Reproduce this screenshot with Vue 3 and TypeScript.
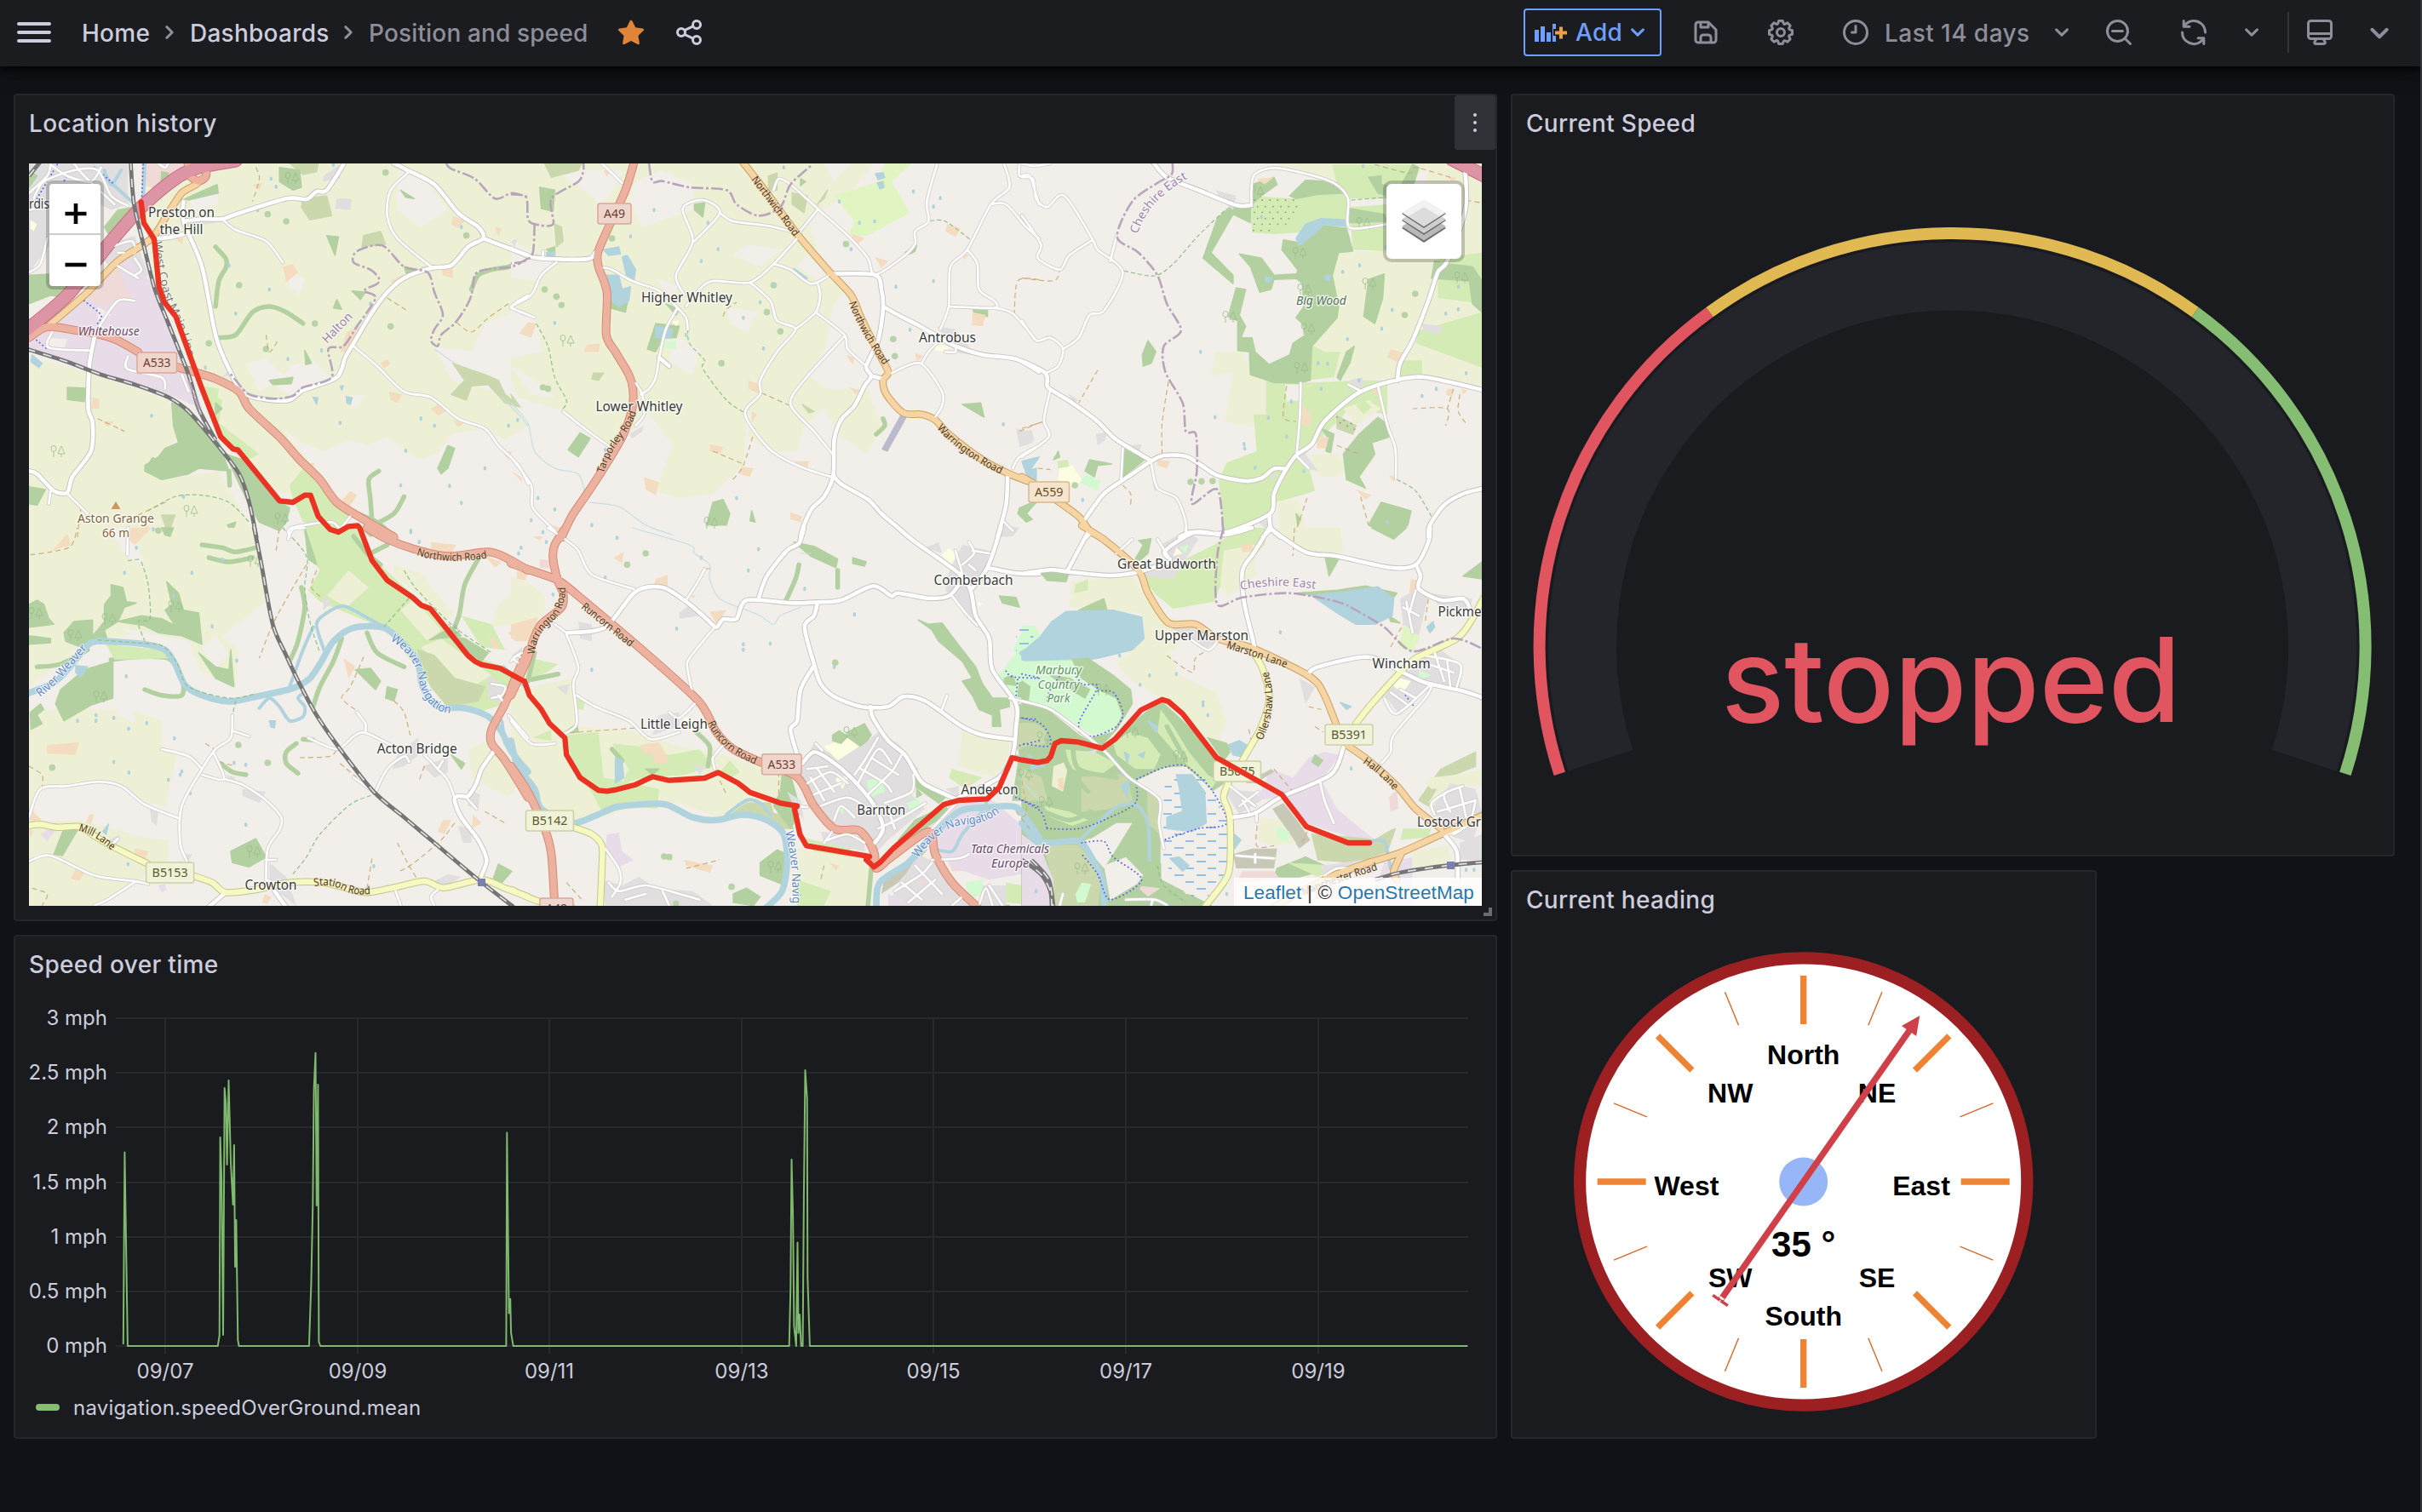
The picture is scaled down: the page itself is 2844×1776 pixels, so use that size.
<script setup lang="ts">
type Pt = [number, number]
interface Sheet { x: number; y: number; kx: number; ky: number; src: string }
interface Shape { kind: string; d: string }
interface Label { t: string; x: number; y: number; w: number; c?: string }
interface RoadLabel { t: string; d: string; w: number; c?: string }

const AREAS = ['farm', 'land', 'wood', 'grass', 'scrub', 'golf', 'park', 'water', 'res', 'ind', 'yard', 'school', 'strip', 'brown', 'pink', 'marsh']

/* Survey sheets: every row is "kind x,y x,y …; x,y …" in the sheet's own grid. */
const sheets: Sheet[] = [
  { x: 0, y: 180, kx: 2.529, ky: 3, src: `
farm 440,30 1568,30 1568,540 1440,600 1400,700 1290,680 1340,800 1500,850 1568,960 1500,1010 1440,970 1340,990 1300,1060 1240,1080 1150,1000 1090,1030 1040,1010 960,1050 880,1010 830,960 960,1150 860,1200 790,1180 650,950 600,800 520,560 460,480 430,200
farm 86,720 260,770 500,870 530,1000 430,1100 480,1150 650,1120 760,1352 86,1352
land 560,150 650,145 645,180 570,200; 860,750 930,730 985,790 860,850 820,830; 730,740 790,720 850,790 770,840; 1180,60 1260,90 1330,200 1250,260 1180,200; 860,430 905,440 890,500 860,470; 1010,860 1080,850 1060,900; 1400,700 1480,700 1568,760 1568,860 1500,800 1420,770
res 86,36 380,36 380,180 330,200 200,120 150,320 86,420
res 320,320 400,290 440,430 420,450 370,440 310,380; 530,770 570,790 600,900 570,860; 1000,160 1045,160 1040,200 995,195; 550,225 640,225 640,245 560,260; 1250,400 1290,400 1260,425; 960,80 1010,40 1010,90 960,100; 700,780 660,790 680,760
ind 86,640 150,590 230,500 300,440 350,370 370,360 470,480 500,600 560,780 600,900 520,860 280,780 86,690
pink 250,500 300,440 350,400 390,510 310,540; 420,36 560,36 540,90 480,130 420,110
land 290,540 330,570 290,590; 140,650 200,655 190,690 145,685
wood 86,430 160,425 230,480 200,510 150,500 86,530; 86,60 110,80 86,120; 350,200 400,190 330,300 310,260
wood 510,880 560,900 650,1020 680,1120 590,1110 560,1130 480,1150 430,1120 430,1100 470,1070 490,1040 530,1020 515,960
wood 670,1060 720,1080 830,1230 860,1250 850,1300 830,1330 770,1300 740,1240 700,1140
grass 630,850 660,870 650,950 770,1060 740,1080 700,1060 640,960; 600,820 650,830 640,900 620,880
grass 860,1170 900,1110 950,1130 1000,1240 1040,1280 1000,1330 900,1300 870,1220; 905,1352 900,1310 960,1290 1060,1352
scrub 1345,740 1390,760 1440,780 1480,800 1500,850 1545,895 1500,880 1450,815 1400,820 1385,870 1340,850 1380,800
scrub 900,160 970,150 985,220 920,235 895,190; 860,36 945,36 940,65 900,75; 1080,290 1130,275 1145,320 1075,330; 480,1275 520,1275 500,1340 490,1310
wood 830,50 890,60 895,120 870,130 830,100; 550,160 645,110 648,140 560,165; 480,65 500,70 500,110 478,105; 970,290 1005,295 995,360; 1200,400 1240,410 1210,435; 1045,485 1085,490 1070,515; 1000,515 1015,550 990,545; 905,695 925,740 908,745
wood 800,800 870,790 865,812 810,815; 1300,1110 1330,1030 1350,1040 1330,1110 1310,1130; 200,825 255,828 250,875 200,868; 86,1175 135,1185 110,1240 86,1235; 640,880 660,900 640,920; 1190,130 1230,160 1205,155; 675,1310 700,1300 690,1335
hedge 640,330 670,370 672,400 650,450 640,540; 650,650 700,640 750,560 800,540 850,560 900,600; 1400,480 1420,430 1460,410 1510,400 1555,375; 1105,1300 1100,1220 1095,1150 1125,1120; 1110,1310 1170,1270 1200,1210; 680,1120 682,1170; 440,1110 455,1080; 1060,1270 1120,1300 1150,1330
yard 840,400 870,390 885,420 850,455; 1010,700 1030,630 1070,610 1060,650 1030,700; 1345,220 1380,240 1360,265 1340,250; 1160,450 1200,425 1195,445 1170,465; 1310,390 1345,395 1345,440 1315,430; 1280,900 1310,880 1325,910 1300,925; 275,860 295,865 295,900 270,900; 1010,1230 1040,1190 1060,1205 1030,1260; 1155,840 1195,850 1180,880 1160,870; 390,1330 440,1310 445,1352 395,1352; 1130,740 1150,725 1160,740 1140,760; 1345,940 1380,950 1360,965; 1490,1050 1520,1050 1510,1080; 750,110 780,105 770,130; 1550,620 1568,600 1568,650; 305,945 340,945 320,965; 1470,260 1490,265 1480,295; 520,300 545,300 540,320; 905,1100 935,1090 925,1130
school 90,235 110,250 100,275 90,265
water 95,710 125,740 115,755 92,735; 1010,820 1020,820 1015,835; 1028,858 1046,862 1040,885 1030,880; 930,860 944,862 940,885
pond 805,90 680,395 700,565 855,725 610,755 1100,530 1290,960 1510,960 1440,1110 1205,1048 1335,1172 955,695 820,118 765,200 990,40 450,925 600,60 1010,950 1250,935 1190,1170 1370,1232 1220,1330 800,480 1370,260 545,1210
copse 1145,68 850,240 795,215 710,465 620,670 935,600 1160,610 1385,290 790,690 470,1330
trunk 86,650 140,612 230,625 300,640 350,660 410,700; 470,735 560,765 640,795 710,840 740,900 830,1000 890,1080 950,1150 1000,1230 1080,1290 1170,1352
motor 80,622 200,500 330,310 420,190 520,90 590,50 700,26
prim 150,602 260,490 350,380 450,300 500,210 540,140 580,112 600,90
trunk 558,36 565,80 590,98 612,80 610,36
tert 545,170 545,240 600,400 640,640 680,760 730,850 850,872 900,835 1000,790 1025,720 1050,670 1100,570 1150,490 1200,440 1280,405 1340,395 1390,330 1435,300 1420,260 1360,210 1290,110 1210,60 1170,36; 1435,300 1490,325 1568,360; 545,240 600,232 660,232 700,215 850,160 910,162 940,135 970,130 1020,40
tert 86,1120 110,1130 160,1190 200,1195 215,1140 270,1050 275,950 262,900 265,750 280,650; 460,300 500,297 545,285
minor 1215,65 1160,130 1150,220 1180,300 1280,400; 660,232 700,270 790,310 840,385; 1050,680 1120,750 1200,840 1280,860 1360,935 1440,970 1480,1030 1540,1100 1568,1165; 200,1200 260,1270; 150,1190 145,1235; 280,650 300,600 350,520 400,520; 155,630 145,685 270,695; 380,715 378,760 480,790 490,830; 860,1352 865,1320 980,1300 1010,1320 1040,1280; 1568,500 1520,540 1568,570; 470,36 490,50 500,36
minor 86,140 140,80 150,40; 86,420 120,390 140,300; 100,160 130,100 220,60 290,60 330,150 380,185; 330,330 390,310 400,350 350,350; 150,40 200,80 270,100 300,50; 220,36 250,80 340,180; 540,780 560,840; 400,370 420,410 400,430; 340,390 410,440; 86,200 150,180 190,150
rail 388,30 398,180 430,340 460,480 500,600 560,780 590,900 640,1010; 80,690 200,735 300,780 400,815 500,860 560,910 640,1020 710,1130 740,1230 762,1356; 86,80 120,30
brook 430,36 425,180; 280,50 400,180; 310,60 330,110 360,60
cycle 425,40 420,180; 250,520 300,570 290,600; 170,40 110,160; 100,650 140,690; 200,70 190,100; 280,50 340,110
bound 1325,36 1340,55 1410,90 1470,160 1520,140 1568,155; 1568,370 1520,400 1440,410 1410,430 1400,500 1380,550 1350,600 1310,640 1300,680 1280,660 1290,620 1315,570 1290,490 1270,420 1200,400 1135,325 1060,345 1050,385 1100,410 1125,440 1120,460 1080,485 1115,510 1060,610 1020,680 975,690 985,790 900,825 870,855 810,865 740,850 700,800 680,770; 560,800 600,930
path 440,1260 520,1210 600,1205 680,1230 740,1300
track 1150,510 1210,555; 1510,530 1450,580 1400,630 1350,590; 290,935 370,980; 760,50 770,90 750,170; 790,640 800,700 825,660; 230,1352 240,1250; 410,1275 500,1225
stream 1290,690 1350,740; 1490,860 1540,920 1568,960` },
  { x: 600, y: 180, kx: 2.529, ky: 3, src: `
farm 0,30 1080,30 1000,150 880,230 930,410 1000,470 960,530 930,700 880,780 940,830 1060,830 1100,960 1060,1060 980,1000 930,900 870,960 850,1050 770,1050 700,1000 720,930 700,920 690,1100 600,1200 500,1215 430,1190 480,1030 400,900 380,960 300,1040 160,910 20,860 0,800
land 370,100 450,60 540,110 540,200 390,260 350,160; 0,540 80,600 90,700 0,720; 640,540 735,560 700,630 650,600; 660,360 700,320 800,340 740,400; 0,300 60,350 130,380 80,450 0,440; 900,330 940,400 920,450 850,400; 380,950 480,1020 430,1150 300,1090; 0,750 60,790 130,860 60,850; 480,640 560,690 540,780 470,740; 930,36 1010,36 960,100; 130,60 330,60 310,120 260,200 250,160; 430,440 500,470 470,500
golf 1110,36 1190,36 1130,100 1185,210 1060,290 1000,290 1020,240 960,150 1090,100
wood 545,180 575,175 570,225 545,200; 85,120 130,130 125,205 90,195; 295,510 350,500 340,560 295,545; 430,600 500,610 490,650 450,650 430,700 405,690; 600,1230 630,1220 650,1270 640,1310 580,1310 590,1270; 205,985 235,1005 200,1070 170,1045; 1340,885 1395,880 1405,930; 1370,545 1415,545 1415,575 1375,560; 1170,350 1205,325 1200,345 1185,355; 460,530 500,550 490,570; 715,1260 725,1300 710,1295; 1510,1250 1568,1220 1530,1270 1548,1290 1530,1300 1505,1270; 860,90 875,100 860,115; 105,340 130,330 130,360
scrub 100,36 210,36 200,60 120,85; 130,250 150,260 155,310 135,330; 835,140 880,150 870,210 835,180; 765,80 790,70 790,130 765,130; 910,180 940,130 930,160; 865,885 900,910 885,915; 245,775 275,775 260,800 240,795; 0,850 25,890 10,890
hedge 1085,990 1110,960 1105,935
water 285,430 320,430 330,480 355,470 350,520 320,540 300,520; 330,365 345,360 370,410 365,450 345,440; 1082,72 1105,68 1110,85 1090,92; 1088,105 1105,100 1108,120 1095,125; 430,610 480,620 475,650 430,650; 275,340 320,330 325,355 290,360; 840,405 880,440 870,450; 105,350 130,348 130,365 108,365; 1535,1120 1560,1110 1560,1150 1540,1145
park 455,665 490,660 490,690 455,685
res 1265,610 1320,620 1380,710 1330,705 1290,650; 350,990 395,960 390,980 360,1005; 1500,970 1540,980 1550,1020 1510,1035; 0,310 20,300 10,330; 1460,1310 1510,1320 1490,1350 1450,1352
yard 25,635 50,595 75,600 60,650; 225,675 265,670 260,700 215,700; 395,1140 440,1160 430,1205 400,1185; 590,1025 630,1035 620,1060 590,1050; 685,1105 720,1110 710,1140 680,1130; 1295,250 1335,265 1320,295 1290,275; 1080,365 1120,380 1100,405; 1015,285 1050,300 1030,320 1010,305; 705,800 740,815 740,850 705,830; 1370,560 1410,570 1400,610 1370,605; 840,1085 885,1085 880,1110 850,1105; 830,1265 865,1280 860,1300 830,1290; 1005,825 1035,835 1025,850; 275,60 295,60 285,85; 1340,350 1360,360 1345,375; 995,710 1020,720 1015,745; 1200,705 1225,715 1205,735; 715,910 730,920 715,950; 0,1120 30,1140 35,1160; 120,1310 150,1320 130,1340; 900,175 920,185 905,190
school 1260,675 1300,680 1290,700 1260,695; 480,590 500,590 490,610
strip 1160,915 1178,925 1118,1052 1100,1043
pond 425,200 585,245 355,293 615,338 565,380 785,465 750,688 690,580 520,640 1010,338 1143,470 1255,450 1195,135 1080,240 1035,245 975,170 1462,955 130,598 670,1215 130,1255 240,1310 1275,158 1255,188 80,1215 60,1293 810,50 280,1045 740,525 1185,622 20,940
copse 100,480 150,535 95,825 110,830 625,740 1135,655 1140,715 760,560 800,628 300,300 780,465 995,320 135,505
trunk 367,26 340,130 290,260 258,350 260,400 285,490 283,640 310,700 350,780 362,830 360,900 330,1000 270,1120 220,1210 180,1280 150,1354
prim 685,26 760,140 850,285 940,410 1010,500 1040,580 1090,700 1120,770 1105,800 1115,850 1165,915 1220,920 1260,940 1300,990 1400,1080 1480,1130 1545,1160
tert 0,335 60,365 130,373 230,372 250,350; 945,425 1080,428 1100,480 1105,550 1090,660 1055,750 1070,785 1050,820 1020,890 980,940 960,1010 957,1135 930,1210 895,1250 870,1310 860,1352; 957,1135 980,1165 1060,1220 1100,1270 1150,1320 1180,1352; 1070,785 1105,795; 1105,540 1150,570 1200,600 1260,640 1320,680 1400,710 1500,725 1568,770; 1475,1140 1470,1240 1445,1352; 440,720 470,750
minor 275,403 300,410 360,450 440,485 495,545 520,580 525,620; 495,545 460,620 440,720 430,790 410,830 385,850; 370,810 390,850 395,920 370,960; 520,540 560,480 600,450 710,455 780,390 850,300; 515,500 490,430 540,310 510,195 570,165 620,210 545,310; 620,210 660,240 760,255 830,275; 710,455 770,520 790,590 845,620 790,700 740,800 740,850 695,920 770,1045 860,1105 950,1140; 780,390 830,410 890,460 940,435; 910,455 918,500 905,560 845,620; 905,560 990,640 1000,690 1055,750; 990,645 870,800 830,885 900,980 955,1060
minor 855,280 910,200; 780,130 795,90 830,110 915,200 1000,290 1060,370 1080,428 1160,370 1200,320 1200,275 1240,240 1235,170 1265,40; 1130,775 1215,740 1280,840 1280,890 1260,930; 1220,740 1240,700 1280,650; 1275,620 1300,540 1305,400 1355,340 1425,180 1480,120 1465,40; 1425,180 1470,180 1530,260 1568,300; 1355,340 1385,390 1390,480 1435,520 1435,545 1300,540; 1435,545 1490,565 1560,660; 0,540 60,500 90,430 135,385; 0,545 70,578; 155,910 230,980 295,1035; 0,1070 60,1170 65,1250 130,1330; 270,36 330,105; 1510,36 1510,80 1540,80 1568,180; 1490,1110 1510,1070 1568,1030; 1465,1300 1490,1330; 1290,700 1320,700 1320,680; 95,345 95,370
bound 0,145 45,155 50,230 70,250 125,250 120,160 200,100 215,60 215,36; 70,250 65,350 40,380 0,388; 410,36 420,100 450,98 530,120 640,130 670,180 735,220 800,190 830,110 895,40
path 75,600 110,680 130,790 165,870 155,900; 525,620 530,670 575,730 570,760 640,870 695,915; 1245,238 1290,240 1365,305
track 745,845 830,890; 725,970 690,1100 655,1155; 600,1050 690,1095; 1495,570 1505,450 1568,445; 1510,980 1568,950; 630,575 640,550 670,525
stream 0,880 50,950 70,1050 130,1110 200,1130 220,1200; 230,1230 320,1245 400,1310 480,1345` },
  { x: 1200, y: 180, kx: 2.703, ky: 3, src: `
farm 1010,345 1460,345 1460,820 1290,785 1190,790 1070,800 1000,790 910,670 1000,570 985,420; 815,30 1460,30 1460,350 1160,350 1160,160 1040,150 990,100 870,60 815,50; 615,700 700,700 730,780 775,790 775,920 740,920 735,965 645,945 670,770 600,785
grass 775,800 880,810 1080,800 1160,800 1160,920 1040,900 900,1060 930,1190 810,1230 790,1270 640,1352 625,1150 650,1090 745,1050 735,920 775,920
land 835,815 880,815 880,870 840,875; 790,640 850,640 800,700; 960,140 995,135 990,180 960,175; 1250,70 1290,60 1280,110 1250,110
farm 810,1225 880,1225 900,1320 980,1330 1010,1352 820,1352; 920,1060 1000,1060 1030,1100 1010,1140 960,1140 920,1120; 1020,900 1100,870 1140,900 1060,960; 905,820 960,810 1030,840 1010,900 920,900
grass 905,825 960,805 1030,840 1010,900 920,910; 725,150 860,160 1040,130 1040,250 880,280 800,285 730,280; 1040,190 1160,180 1160,345 1050,340; 1260,625 1460,560 1460,755 1250,670; 1320,370 1460,350 1460,530 1320,510; 985,40 1250,40 1240,110 1160,160 1040,160 1000,110; 910,670 960,700 1010,700 990,790 900,800; 1200,730 1270,730 1270,785 1200,790; 1060,890 1085,870 1110,895 1085,920
wood 725,180 725,245 670,215 600,350 670,430 670,460 575,370 620,230 660,190; 690,355 760,370 800,430 875,425 875,442 800,445 790,480 755,490 725,400
wood 680,475 710,480 690,570 710,610 695,650 730,650 740,700 785,745 850,710 860,670 900,640 890,600 870,580 895,540 890,460 870,440 875,410 825,340 830,305 880,315 920,270 960,255 1030,265 1050,345 1005,350 985,430 1005,540 1000,580 920,680 915,800 880,810 800,808 725,780 722,700 685,695 685,590 655,575
wood 730,110 800,85 810,110 760,150 730,180; 850,150 900,95 980,100 1030,140 940,145 870,160; 1040,195 1150,215 1160,240 1040,245; 1100,85 1140,80 1140,110 1200,120 1240,40 1260,50 1240,120 1160,150 1130,140; 1100,445 1150,425 1145,510 1120,600 1085,575; 400,660 425,700 410,740 385,750 382,710; 1130,930 1165,960 1165,1000 1110,1020 1120,1060 1070,1140 1090,1180 1030,1150 1020,1060 1070,990; 1140,1230 1235,1260 1225,1310 1180,1352 1100,1310; 320,1040 390,1080 320,1140; 215,1080 285,1095 240,1100 230,1140 200,1120; 1310,380 1350,390 1430,400 1460,450 1460,560 1430,530 1420,450 1300,440; 1000,790 1030,700 1055,680 1040,740 1010,800; 0,1250 30,1290 10,1295; 100,1080 115,1050 120,1070; 950,970 990,990 980,1055 965,1050 970,1000; 870,1270 885,1290 875,1310
scrub 1000,925 1060,960 1050,990 1000,970
park 185,1160 200,1130 250,1155 240,1190
school 120,1105 160,1100 190,1150 170,1180 115,1150
grass 112,1085 145,1080 150,1105 115,1110
water 870,300 900,250 950,230 1030,235 1030,258 960,250 910,300 880,325; 0,1085 55,1070 30,1110 45,1150 20,1150; 773,435 793,440 785,455 773,450; 963,428 976,430 976,450 963,448
yard 745,90 800,85 770,110; 885,870 920,930 910,965 880,950; 940,1000 975,1000 965,1040 935,1040; 1170,690 1215,705 1190,735 1160,720; 430,1080 470,1085 460,1110 430,1100; 1060,1185 1110,1205 1090,1220; 1165,1135 1185,1140 1180,1160; 1350,830 1370,830 1365,860 1345,850; 1350,85 1380,85 1370,100; 1115,830 1130,840 1115,855; 1395,830 1415,835 1400,850
res 0,980 30,975 40,1010 0,1030; 235,990 270,980 265,1010 240,1030; 615,130 680,150 670,200 630,160; 1270,600 1335,610 1325,640 1275,625; 880,1030 940,1120 900,1110 870,1070; 345,1030 380,1025 370,1060; 1040,800 1080,790 1085,820 1050,830; 750,1300 790,1290 780,1330; 415,1160 440,1180 420,1190; 145,845 180,870 165,880; 780,1135 810,1130 800,1150
dots 738,165 870,165; 748,188 880,188; 738,208 870,208; 748,230 860,230; 738,250 850,250; 735,272 800,272; 1000,930 1060,960; 1010,950 1070,980
motor 1365,22 1480,86
tert 415,30 460,85 560,130 680,183 728,183; 1405,30 1410,180 1380,300 1345,390 1320,420 1290,520 1240,660 1200,740 1192,800; 0,732 75,775 80,820 95,835 160,880 240,945 300,1010 410,1083; 200,1290 260,1200 330,1145 410,1085 450,1065 520,1068 570,1100 620,1135 710,1155 760,1145 800,1112 840,1112; 500,1352 540,1335 640,1338 785,1272 800,1200 830,1130 870,1065 920,1025 960,945 1060,850 1150,810 1270,788 1460,833; 785,1272 790,1320 820,1352; 1470,1180 1400,1200 1340,1240 1295,1310 1290,1352; 790,1325 765,1352; 205,1352 215,1340
minor 728,183 735,80 800,52 900,72 990,105 1035,160 1040,262 1160,250; 885,810 882,930 872,1060; 1130,820 1160,960 1185,1040 1187,1145; 870,1065 910,1110; 410,1090 430,1180 490,1215 520,1300 520,1352; 320,1040 315,1150; 90,835 70,940 85,1000 0,1070; 0,590 45,660 90,650 130,690 115,750 75,775; 130,690 180,650 215,570 260,555 320,420 240,340 225,305 135,150 80,190 45,160 35,90 0,85; 0,220 60,320 50,370 120,410 150,360 225,305; 280,380 300,295; 1080,840 1035,815; 0,36 40,45 90,36
prim 0,1140 40,1165; 100,1215 180,1280 215,1330 260,1360
bound 478,36 475,75 430,105 350,170 302,295 370,350 430,430 460,530 505,625 450,680 455,770 510,880 520,980 552,990 555,1120 540,1235 620,1185 640,1352
path 325,415 420,432 480,390 560,290 650,195; 1190,1150 1250,1190 1300,1280; 1045,165 1160,155
track 240,765 180,880; 465,805 445,950 445,1060; 0,440 100,450 120,415; 1240,900 1350,900 1345,960; 1390,850 1385,910 1415,960; 320,1170 345,1200 345,1240; 0,970 70,945; 1000,1030 1070,1060; 905,1215 870,1330; 1075,1210 1100,1310; 1120,40 1230,70 1250,50 1360,85; 840,820 830,930 870,945; 1410,165 1460,175; 50,1110 90,1115; 1370,830 1350,900
pond 1083,45 1018,418 1072,395 1175,552 1033,655 1142,618 940,740 970,742 855,875 782,932 840,998 705,1025 613,930 567,700 950,830 1155,330 193,1222 1160,1300 1315,830 740,1108 1385,470 1410,775 895,1120 1385,550 1345,565 760,225 1270,855 707,1040 1070,800
copse 1248,495 1215,570 535,1158 570,1156 605,1155 168,1170` },
  { x: 0, y: 620, kx: 2.529, ky: 3, src: `
farm 86,0 760,0 790,260 660,380 710,430 700,560 590,500 560,400 480,380 400,370 320,400 260,400 86,560; 86,640 390,640 480,680 480,780 525,800 490,980 430,970 350,900 120,910 86,1000; 86,1040 240,1030 430,1090 500,1100 500,1180 440,1190 420,1240 280,1331 86,1331
land 320,0 390,0 430,130 380,110; 600,420 640,380 680,440 640,500; 350,600 400,640 400,690 350,660; 350,350 480,380 560,400 600,520 550,500 500,420 420,390
grass 905,0 1060,0 1110,110 1230,240 1280,290 1400,450 1500,490 1540,520 1500,620 1420,650 1280,560 1150,360 950,260 915,220 950,150 920,100
farm 970,240 1035,150 1095,210 1030,280; 1190,290 1230,250 1310,360 1270,400; 1250,420 1310,390 1460,520 1400,560 1340,540; 1170,130 1250,160 1350,310 1310,330 1240,230 1170,170; 1390,780 1450,750 1540,900 1510,950 1400,880; 1480,270 1530,220 1568,230 1568,330 1460,350
scrub 1240,430 1290,450 1350,530 1440,560 1420,610 1330,630 1280,560
wood 1330,380 1380,390 1450,440 1430,470 1370,420; 1275,395 1340,350 1370,380 1300,390
wood 86,270 110,255 130,270 145,320 160,340 86,350; 86,380 150,390 150,405 86,410; 190,370 220,330 275,325 275,390 240,420 195,400; 330,200 365,210 375,260 405,265 370,280 350,330 310,360 320,400 260,400 290,360 310,330 310,270 330,240; 350,330 420,310 480,320 520,345 490,290 510,270 495,190 530,230 545,290 590,300 600,410 540,380 470,370 430,345; 165,620 180,570 250,500 335,470 335,600 270,625 190,680; 590,440 640,490 680,500 685,430 695,560 640,530; 1055,500 1100,495 1130,540 1115,570; 1150,560 1180,570 1170,610 1145,600; 685,1140 760,1095 790,1160 740,1195 690,1180; 190,1060 230,1065 185,1155 160,1150; 90,650 120,620 130,640 110,660 125,690 92,710; 1480,1185 1520,1210 1490,1250 1465,1235; 905,0 930,90 940,130 915,110; 1340,800 1380,830 1370,850; 480,0 515,0 505,30 490,25; 1070,0 1150,10 1100,30
hedge 110,490 180,480 260,430; 330,465 400,455 500,460 540,530 540,590 480,590 430,570; 600,60 660,70 700,85 760,70; 620,105 680,120 750,105; 895,210 905,280 885,400 860,470; 1015,390 990,470 950,560 930,630; 1090,370 1120,440 1200,490; 1420,110 1380,200 1365,300 1350,350; 880,760 850,790 850,830 885,865; 655,830 690,860 730,870; 1100,90 1150,60; 900,745 930,748; 1050,30 1090,90 1130,130
grass 315,410 480,430 510,460 340,465; 1370,310 1460,340 1500,430 1430,420
water 225,485 260,490 240,525 225,510; 305,1070 322,1045 315,1080; 800,680 818,680 815,705 805,702
yard 140,765 235,755 225,800 140,795; 90,990 125,1030 90,1035; 265,1010 280,1010 270,1045 255,1040; 225,1200 255,1210 235,1245 210,1235; 400,1130 440,1140 430,1175 400,1160; 785,1290 805,1300 795,1325 780,1320; 1405,1010 1430,1040 1400,1060; 1315,1030 1340,1030 1320,1080 1300,1070; 390,0 450,0 400,60 380,40; 1280,50 1355,60 1340,90 1280,80; 1020,460 1055,490 1035,530; 155,80 200,20 210,60; 1450,380 1475,400 1485,430 1460,420; 1510,370 1568,320 1568,400 1530,400; 86,1060 100,1070 90,1090; 1440,100 1490,120 1470,140; 1535,150 1568,160 1560,185 1535,180
res 720,920 790,930 770,970 720,945; 1180,800 1240,740 1255,790 1200,840 1165,850; 1255,840 1330,810 1330,860 1290,880; 445,990 470,1000 465,1050 450,1035; 1360,1050 1400,1060 1400,1110 1375,1110; 800,1180 850,1230 880,1331 800,1260; 1390,920 1425,940 1420,990 1390,980; 310,1110 355,1080 355,1100 330,1140; 1450,520 1500,560 1490,620 1450,600; 1290,1245 1330,1220 1370,1230 1330,1260; 670,870 700,880 690,900; 540,1150 570,1150 560,1175; 960,240 985,265 960,290; 1520,450 1550,420 1550,470
ind 120,1080 145,1060 165,1065 140,1105; 470,1260 490,1255 495,1275 480,1285
river 80,585 160,545 200,500 260,415 290,400 350,402 430,410 490,430 520,480 550,555 600,590 680,612 760,595 870,565 920,530 955,470 990,400 1050,352 1140,352 1200,410 1240,470 1255,560 1300,630 1380,635 1450,665 1490,720 1520,790 1568,860
brook 962,430 940,340 970,300 1020,275 1080,310 1140,350; 770,635 800,600 830,630 860,680 900,665 905,630 885,600 905,580; 930,350 900,430 860,560; 1490,680 1500,760; 1495,490 1560,560
rail 754,-4 775,120 810,340 850,450 890,550 940,660 1010,780 1110,930 1200,1020 1290,1110 1410,1230 1525,1336
trunk 1090,0 1150,40 1230,75 1330,100 1450,85 1510,110 1568,150; 1568,430 1530,530 1500,620 1460,710 1460,760 1500,820 1568,950
sec 80,1050 120,1045 170,1055 240,1053 280,1085 330,1120 440,1185; 570,1225 630,1250 670,1285 760,1275 860,1250 960,1250 1030,1270 1090,1285 1180,1265 1260,1245 1320,1268 1430,1240 1500,1270 1568,1300
tert 1430,1225 1445,1170 1420,1100 1370,1020 1350,960 1360,945 1390,945 1415,900 1430,850 1465,790; 620,1336 665,1290; 815,1280 850,1336
minor 86,1020 120,920 200,910 290,895 360,910 430,975 535,1025; 665,885 720,905 790,960 835,1020 830,1065 795,1130 790,1240; 600,870 665,885 635,795; 480,780 560,805 600,850; 555,1175 535,1110 540,980 600,850 640,780 685,740 690,660; 690,715 740,735; 86,1175 150,1155 280,1225 400,1245 440,1255; 400,1248 320,1310 280,1331; 915,740 1000,780 1050,735 1085,722 1160,765; 1085,722 1085,690 1060,650; 1115,930 1150,850 1200,805 1215,825; 1260,800 1300,850 1330,890 1350,950; 1385,950 1415,990; 1290,1331 1280,1300 1300,1275; 1190,1331 1175,1280; 378,95 380,0; 855,40 870,5 905,0; 1460,600 1490,590 1500,560 1460,550; 1510,660 1568,740; 1480,590 1500,620; 1300,850 1315,820; 1050,880 1110,930; 790,1170 820,1170; 790,1240 815,1250; 1550,440 1525,460 1545,480; 330,1120 350,1095
path 420,120 440,200 445,320 410,330 430,400; 380,115 420,110; 290,395 400,405 480,415 525,475 560,560 680,600 760,585; 700,610 690,660; 870,1220 910,1160 950,1080 1040,975 1110,940; 840,0 910,100 905,210 920,330 950,440; 1140,350 1220,240; 1200,150 1240,220 1350,350 1460,440
track 910,130 870,210 810,340 770,460; 90,95 150,85 210,65 230,0; 940,150 925,210 960,250; 1080,455 1040,560 1015,600 1060,645; 1170,610 1200,650 1220,740; 890,810 980,805 1000,780; 1350,1040 1310,1100 1230,1180 1180,1215; 1180,1110 1210,1180 1240,1240; 1105,1165 1090,1270; 1010,830 1060,880; 1260,840 1245,890; 1440,1000 1500,1040; 86,840 125,870 125,910; 610,760 650,790; 650,825 700,840; 820,80 830,0; 95,1270 140,1290 125,1331
pond 370,158 570,158 515,240 405,70 630,347 285,660 338,670 436,688 518,742 338,825 383,862 500,888 535,870 565,935 730,1046 230,680 660,112 375,523 703,468 382,708 285,680 540,858 695,828 730,835 455,5 1220,15 1245,50 1540,90 380,1185 1110,1192
copse 795,828 155,845 708,765` },
  { x: 600, y: 620, kx: 2.529, ky: 3, src: `
farm 0,170 60,200 100,240 100,300 60,340 0,350; 0,560 60,560 180,530 195,700 380,720 500,770 640,800 700,830 820,860 830,950 750,980 640,1030 500,970 350,990 180,1050 80,1000 0,820; 850,1130 1040,1160 1080,1230 1060,1331 850,1331; 1340,710 1480,740 1480,800 1440,880 1330,840
grass 165,730 260,720 275,880 440,920 435,990 350,980 270,1000 220,890 180,830; 300,760 380,770 470,800 560,780 600,840 520,870 400,880 330,900 350,850; 60,460 140,480 80,530 40,540; 850,1240 950,1280 930,1331 850,1331; 860,1090 1010,1130 1010,1160 900,1140; 1310,850 1400,880 1350,920 1300,880; 65,740 120,710 120,750; 620,860 650,820 680,860 640,890; 195,600 220,610 215,640 195,640; 1470,1250 1568,1270 1568,1331 1470,1320
scrub 640,1020 700,970 770,970 780,1010 700,1020; 740,1000 800,1010 840,1060 800,1060
wood 740,1180 790,1135 820,1150 815,1260 740,1225; 660,1290 700,1270 740,1300 720,1331 660,1320; 1210,325 1240,340 1280,335 1340,430 1380,490 1400,550 1430,600 1480,600 1480,630 1450,640 1455,700 1430,700 1430,660 1390,640 1370,590 1340,540 1370,530 1340,470 1270,400 1250,360; 840,50 900,65 970,110 965,140 890,100; 1015,105 1055,120 1050,135 1015,125; 1450,240 1500,245 1510,280 1460,265; 1000,720 1050,690 1070,730 1040,780 1000,740; 1200,870 1290,950 1270,970 1200,910; 1200,1030 1290,980 1300,1000 1170,1110 1150,1100; 805,870 830,870 860,1000 830,1060 780,980 800,930; 1500,660 1568,660 1568,960 1490,960 1510,800; 1500,620 1568,640 1568,670 1500,660; 160,720 195,690 200,720; 400,850 440,850 420,870; 1450,1330 1480,1330
scrub 1510,690 1568,690 1568,780 1500,780
hedge 855,130 845,180 815,260; 970,150 970,210; 550,720 590,770 585,840; 70,440 50,540; 60,535 140,515; 300,780 330,820; 1070,1200 1060,1331
brown 1110,1220 1240,1130 1150,1250 1100,1290
res 865,830 900,760 940,790 1040,770 1090,720 1150,760 1210,850 1190,940 1230,990 1120,1100 1080,1150 1040,1080 960,1060 890,960 850,900; 920,1070 1050,1090 1050,1140 930,1110; 270,1240 330,1260 380,1230 430,1270 540,1280 600,1331 280,1331; 1210,1150 1260,1180 1380,1331 1120,1331 1140,1280; 1300,160 1340,60 1420,80 1410,140 1370,200 1390,350 1330,270 1290,220; 500,300 530,270 560,310 500,320; 200,330 240,340 240,400 205,390; 440,660 500,650 500,700 420,730; 135,560 175,550 165,590; 540,835 580,840 560,870; 1390,1331 1400,1260 1470,1260 1470,1331; 1290,920 1330,910 1330,950; 1230,70 1270,50 1280,90; 820,930 860,960 870,1030 840,980
pink 85,110 120,115 115,145 85,140; 1300,1180 1340,1170 1350,1210 1310,1210; 1210,1250 1240,1240 1230,1280
school 930,770 1000,740 1035,770 970,820; 1280,95 1300,70 1325,95 1305,130; 970,870 1000,880 985,920 965,890; 508,660 540,680 520,690; 1385,262 1400,265 1390,280
park 1055,890 1100,880 1110,930 1070,950; 1175,970 1210,955 1220,980 1190,1010; 975,990 990,985 985,1010
wood 1205,920 1220,940 1205,950; 955,730 975,715 1000,735 980,760 955,750
ind 1250,1050 1330,965 1430,960 1568,1100 1568,1210 1420,1240 1320,1200 1260,1140; 285,1080 320,1075 330,1140 365,1170 320,1195 280,1140; 1120,1290 1200,1331 1120,1331
park 1350,1250 1400,1240 1400,1290 1360,1310; 1530,340 1568,400 1568,600 1470,590 1440,530 1500,440 1490,430
wood 1465,530 1490,520 1500,555 1465,550; 1510,545 1540,550 1540,600 1505,595
water 1510,440 1568,400 1568,480 1530,470; 310,810 330,820 335,880 310,900; 1490,800 1560,810 1560,830 1500,820
marsh 1500,345 1568,345 1568,420 1500,440
yard 430,180 465,165 465,210 425,200; 305,105 335,85 330,125; 590,295 640,290 610,340; 385,765 440,755 460,800 470,830 430,830 420,800 390,790; 515,1170 600,1190 590,1215 520,1190; 0,340 80,315 70,380 30,400 0,390; 945,1180 975,1190 965,1210; 65,30 95,30 85,45; 15,160 45,165 40,185; 535,235 550,240 540,250; 1345,890 1370,890 1360,910; 130,0 145,0 135,10
river 0,750 20,840 70,920 90,990 180,1040 250,1015 310,985 380,975 460,975 540,1020 610,1030 690,1010 760,1030 810,1080 820,1180 805,1280 760,1336; 1085,1336 1095,1250 1180,1180 1240,1100 1330,1000 1420,985 1500,985 1550,1060 1568,1090
brook 640,1010 700,960 740,970 770,1010; 1250,1130 1310,1140 1340,1080 1400,1000; 1410,960 1415,1000
trunk 165,-4 130,60 125,110 140,190 155,230 150,280 90,340 65,400 50,460 0,590; 0,125 60,150 140,185 200,240 360,400 540,590 580,650 610,720 660,780 750,830 840,870 870,910 900,980 960,1060 1030,1065 1060,1100 1080,1150 1085,1200 1130,1160 1240,1070 1260,1150 1310,1250 1385,1336; 0,840 50,930 100,1060 120,1150 130,1336
sec 185,1055 240,1080 270,1120 270,1200 265,1336; 0,1275 80,1315 180,1334
tert 170,370 280,350 370,225 450,210 520,260 580,320 610,350 630,322 670,320 700,255 830,265 910,262 980,255 1075,205 1130,240 1150,230 1240,248 1300,240 1330,200; 735,250 760,170 820,80 855,55 870,0; 910,262 900,310 872,350 900,480 920,550 960,595 1040,630 1120,630 1165,595 1230,610 1340,700 1400,730 1490,745; 900,485 860,570 850,680 830,710 850,800; 1068,630 1075,670 1120,750 1170,800 1205,870 1230,905 1320,955; 1150,0 1200,50 1330,160 1365,220 1380,310 1420,390 1430,500 1500,620 1500,700 1490,800 1450,880 1330,950; 1455,0 1415,140 1365,220; 1415,140 1500,160 1568,162; 865,830 900,790 950,820 1010,880 1080,980 1105,1060 1080,1110
minor 130,340 165,370; 165,375 200,490 185,550 195,690 150,730; 195,590 250,630 350,680 415,745 500,720; 470,650 500,670 545,620; 605,350 530,460 525,500 540,590; 365,215 240,165 200,80 160,40 110,0; 520,255 550,200 575,145; 635,760 600,810 605,850; 0,680 60,760 130,760; 1280,640 1295,590; 1480,600 1568,625; 1330,960 1250,1060
minor 880,900 950,860 1000,900; 900,940 980,900; 920,980 1000,950 1060,990; 940,840 880,850; 960,1030 980,980 1020,1020; 1030,900 1090,780 1130,830; 1060,940 1130,860 1160,800; 1090,740 1050,820 1020,870; 1110,970 1190,930 1195,870; 1090,1060 1160,1020 1230,970; 940,1100 1000,1080 1050,1110; 930,1110 960,1060; 890,880 930,960; 910,850 960,930; 1070,810 1150,870; 1040,850 1110,900 1130,930; 905,760 925,785; 1120,990 1140,1060; 290,1250 320,1280 400,1260 500,1290 560,1310; 340,1310 400,1290; 280,1130 320,1200 325,1250 300,1300; 450,1280 470,1331; 1360,50 1375,90 1340,130; 1420,90 1370,80; 1310,240 1350,300 1385,345; 1320,80 1340,160; 1360,130 1380,150; 1140,1280 1220,1220 1250,1180; 1180,1320 1260,1240; 1250,1170 1330,1165 1360,1150; 1160,1250 1220,1310; 1200,1190 1280,1290; 1310,1331 1340,1300; 1390,1331 1410,1270 1430,1331; 1420,1260 1460,1331; 850,980 880,985; 0,470 20,450 40,470
track 150,725 200,720 370,705; 795,860 795,950; 620,890 640,940; 165,1250 210,1310; 520,1200 620,1170; 1500,1000 1540,1060; 575,145 600,142; 930,1190 920,1240
cycle 1470,505 1490,525 1568,530; 1510,670 1568,675; 1500,770 1568,750; 1500,950 1568,985; 1500,590 1505,530
stream 360,0 530,60 545,90 590,130 590,180 620,250 700,290 740,310 780,340 800,310 860,280; 1510,880 1568,960; 860,90 890,90
pond 315,35 705,150 872,215 690,410 690,430 770,408 492,355 1020,305 240,500 735,75 280,175 125,235 30,70 105,50 565,105 95,15 960,490
copse 400,90 345,130 455,1158 470,1160 963,475 655,1265 490,1325` },
  { x: 1200, y: 620, kx: 2.703, ky: 3, src: `
farm 160,190 350,170 430,310 560,330 520,380 470,440 500,520 620,580 650,680 620,760 550,740 500,640 440,600 350,540 300,480 390,380 380,300 150,280; 640,80 740,70 740,170 650,240 630,200; 780,0 1010,0 1020,90 900,80
grass 380,180 480,130 610,60 700,0 780,0 770,60 710,130 700,170 640,180 610,260 480,285 430,240; 170,200 210,180 210,220 165,230
farm 640,80 740,60 740,170 655,245 630,200
wood 360,110 385,60 370,45 410,38 400,90 375,115; 180,290 260,250 270,290; 60,160 150,155 140,190 80,185; 960,90 1010,100 975,170; 1110,0 1220,0 1180,40; 1400,170 1460,120 1460,180; 870,230 1000,220 1090,205 1190,230 1180,245 1100,210 950,240; 1165,310 1200,335 1170,330
water 0,440 60,380 95,330 140,295 290,290 380,315 388,390 350,430 240,460 160,470 40,475 0,465; 920,240 1060,220 1130,208 1180,250 1175,310 1120,340 1060,340 1000,300
park 0,345 40,345 60,380 0,430; 0,470 180,465 190,540 240,570 300,600 320,660 280,720 220,730 170,690 80,630 0,600
marsh 0,340 45,340 30,420 0,420
wood 160,465 210,460 290,520 345,570 350,620 300,710 250,770 180,720 220,740 290,720 320,660 300,600 230,560 190,530; 90,520 150,530 215,570 200,600 140,560; 0,540 25,560 20,610 0,600
wood 0,600 80,640 180,730 260,780 360,680 440,610 510,680 620,810 640,900 600,930 520,840 440,850 370,890 440,960 440,1240 600,1331 0,1331
scrub 0,690 40,690 80,720 70,760 0,770
grass 440,640 480,700 530,790 590,870 620,890 600,920 540,850 500,810 430,720; 290,760 340,720 400,740 440,800 420,850 360,850 300,800; 130,780 230,790 300,830 240,880 160,850; 70,980 150,1000 210,1030 160,1050 90,1020
farm 100,840 150,820 130,930 95,910; 200,1120 220,1100 200,1080
yard 112,885 132,880 132,925 118,920
scrub 190,880 330,870 350,960 270,990 190,1000; 0,850 60,880 80,960 0,960; 70,1120 180,1120 250,1230 240,1331 100,1331 90,1200; 400,900 440,950 440,1080 400,1040
land 190,1115 300,1040 350,1040 300,1130 260,1200 200,1120; 260,1190 330,1160 395,1235 280,1312
land 365,890 450,845 520,840 600,920 650,1030 655,1200 590,1300 520,1290 440,1180 440,1100 435,960
marsh 455,880 490,870 580,880 650,1030 655,1200 590,1300 540,1300 450,1180 440,1100
water 490,870 540,870 580,930 585,1040 540,1070 460,1060 460,1020 510,1000 500,920; 470,1165 500,1160 530,1190 510,1210; 655,765 690,750 720,770 710,810 670,800; 1285,350 1305,330 1310,350 1295,370; 20,800 70,840 30,850; 315,910 340,890 335,950; 675,1080 695,1100 675,1130; 325,790 340,800 335,830; 370,800 390,790 385,810; 400,680 430,700 425,720; 1010,615 1045,630 1030,640
ind 0,1080 60,1130 100,1240 100,1331 0,1331; 745,960 790,850 860,880 910,810 960,790 1010,800 950,890 1000,990 1120,1100 1040,1090 900,1040 820,950; 1150,1180 1240,1160 1240,1331 1100,1331
park 170,1290 190,1250 220,1255 200,1320 175,1320
wood 590,740 650,760 660,790 640,820; 810,1200 900,1160 980,1200 880,1230 800,1230; 930,800 955,820 940,840 920,825
brown 795,990 830,970 880,1040 915,1100 880,1130; 670,1150 730,1130 810,1130 800,1200 680,1200; 710,900 790,850 800,860 740,900
scrub 920,1080 1040,1090 1120,1100 1165,1070 1185,1060 1160,1140 1060,1180 940,1170; 1260,960 1330,850 1440,790 1440,840 1350,880 1290,980
farm 1280,900 1300,880 1460,860 1460,910 1300,920; 1240,1140 1350,1120 1370,1200 1240,1190; 760,1020 820,1030 870,1110 800,1120 745,1100
farm 1340,880 1460,850 1460,900 1380,900 1290,970
grass 1210,1060 1300,1060 1290,1090 1200,1100; 840,1180 1000,1190 940,1230
golf 1210,345 1265,380 1240,440 1195,420
res 440,60 520,10 560,40 480,180 380,170 400,130 470,120; 470,350 530,345 620,400 580,430; 1200,250 1260,210 1290,240 1260,380 1210,340; 1290,230 1430,250 1420,290 1320,270; 1150,590 1210,520 1320,420 1400,490 1390,570 1300,560 1200,660; 1300,990 1360,900 1440,920 1460,1000 1430,1110 1370,1090; 640,920 740,930 760,960 690,1010; 950,1190 1080,1170 1110,1200 960,1240; 1390,1110 1460,1080 1460,1170 1390,1170; 880,530 930,560 900,620; 200,790 240,780 230,800
school 1185,525 1235,540 1210,580 1180,560; 490,70 510,90 480,100
park 500,70 530,60 520,90; 805,1050 850,1070 840,1110 810,1090; 1260,500 1300,520 1260,535
pink 700,1210 800,1210 820,1240 680,1250; 360,1260 440,1270 400,1300; 1165,950 1190,920 1195,990 1170,1000
yard 695,60 730,55 735,85 700,85; 1235,180 1255,185 1245,235 1230,225
hedge 160,760 180,850 300,880; 130,780 150,850 210,930; 460,700 500,780 520,820; 70,1000 150,1030 220,1000; 180,1105 250,1060 330,990 380,1030 385,1140 440,1250; 340,1310 390,1230; 550,780 620,830
river 0,1040 40,1100 90,1110 180,1105 220,1160 255,1240 262,1336
brook 180,1105 240,1040 300,985 360,975 400,1040 405,1170; 1110,1105 1150,1105 1170,1200
prim 190,-8 270,50 370,150 400,230 465,335 550,340 620,390 720,420 840,480 940,550 1000,700; 1030,765 1100,820 1190,910 1250,990 1330,1060; 800,1336 890,1280 1000,1220 1100,1180 1200,1145 1330,1080 1468,1010; 1205,1145 1180,1210 1190,1240
sec 1466,245 1430,320 1380,390 1250,460 1200,510 1110,620 1060,690; 735,440 765,500 785,600 760,700 710,800 695,830; 655,900 640,950 660,1020 660,1190 640,1250 580,1336
tert 0,162 90,148 150,155 280,168 370,155 470,120; 145,150 210,15; 470,110 455,80 550,15 640,25 730,0; 785,0 735,90 700,150 705,260 730,380 742,440; 785,0 900,85 1000,100 1170,140 1250,130 1290,50 1295,0; 1250,130 1265,170 1260,215 1330,255 1400,250 1420,280; 905,520 940,490 1100,455 1210,510 1280,545 1400,575 1466,600; 1020,775 980,870 820,950 740,1005 670,1020; 1340,1080 1380,1140 1383,1240
minor 0,610 90,640 190,720 265,790 340,880 435,955 435,1040 450,1130; 945,890 960,960 990,1040; 1300,560 1280,600 1180,730 1170,790 1140,830; 660,910 740,980; 690,980 750,930; 700,960 720,1000; 745,1000 745,1035; 1360,1000 1340,940 1400,910; 1310,1010 1300,970 1350,930; 1370,1080 1420,1040 1440,960; 1320,1000 1440,960; 1390,920 1410,1020; 330,1310 420,1310 460,1330; 415,1310 410,1331; 1150,600 1190,655 1300,550; 1170,580 1220,620; 1200,570 1250,600; 1280,450 1390,480 1380,560; 1310,440 1340,540; 1350,470 1360,560; 1290,480 1370,510; 1220,260 1240,370; 1250,220 1230,300; 1210,280 1260,310; 680,1155 800,1165; 740,1150 740,1180; 520,380 590,430 620,400; 300,90 350,40; 430,40 470,110; 520,0 520,30; 960,1225 1000,1200 1050,1200; 1350,1080 1400,1060; 120,1331 130,1290
rail 1120,1240 1200,1215 1350,1190 1466,1178; 0,1170 60,1220 90,1280 95,1336; 30,1170 85,1240 100,1336
cycle 0,515 60,530; 80,610 90,570 150,490 190,550 240,560 180,690 220,735 300,700 320,650 290,580 240,575; 365,885 450,845 520,840 600,920 650,1040 560,1060 450,1100; 80,1060 180,1060 260,1030 360,970 360,890; 190,1110 260,1105 290,1160 380,1240 280,1310 240,1220 190,1150; 0,670 60,690 90,740 80,770 0,760; 0,960 60,1000 80,1060; 1210,580 1245,630
bound 640,0 620,100 620,270 700,245 850,230 1000,260 1060,290 1150,350 1240,435 1370,390 1460,425
track 460,450 540,510 550,460 590,430; 865,0 860,100; 800,850 860,930; 750,1020 745,1120 800,1120; 890,1110 905,1070; 1170,420 1210,340; 0,890 15,1000 0,1020; 930,700 955,720; 720,710 730,760; 1290,250 1280,330; 910,630 950,640
path 430,1190 450,1260 520,1320
pond 310,450 405,520 490,515 375,553 575,615 820,368 1045,848 590,660 575,625 320,870 650,1290 45,1280 1435,1205 1410,1205` },
]

/* Catmull-Rom smoothing keeps roads and rivers from looking faceted. */
function smooth(p: Pt[]): string {
  let d = `M${p[0][0].toFixed(1)} ${p[0][1].toFixed(1)}`
  for (let i = 0; i < p.length - 1; i++) {
    const a = p[i - 1] ?? p[i], b = p[i], c = p[i + 1], e = p[i + 2] ?? c
    const k = 7
    d += `C${(b[0] + (c[0] - a[0]) / k).toFixed(1)} ${(b[1] + (c[1] - a[1]) / k).toFixed(1)} ${(c[0] - (e[0] - b[0]) / k).toFixed(1)} ${(c[1] - (e[1] - b[1]) / k).toFixed(1)} ${c[0].toFixed(1)} ${c[1].toFixed(1)}`
  }
  return d
}

const areas: Shape[] = []
const lines: Record<string, string> = {}
const ponds: Pt[] = []
const copses: Pt[] = []

for (const s of sheets) {
  for (const row of s.src.trim().split('\n')) {
    const cut = row.indexOf(' ')
    const kind = row.slice(0, cut)
    for (const part of row.slice(cut + 1).split(';')) {
      const pts = part.trim().split(/\s+/).map((q): Pt => {
        const [x, y] = q.split(',').map(Number)
        return [s.x + x / s.kx, s.y + y / s.ky]
      })
      if (kind === 'pond') ponds.push(...pts)
      else if (kind === 'copse') copses.push(...pts)
      else if (pts.length < 2) continue
      else if (AREAS.includes(kind)) areas.push({ kind, d: 'M' + pts.map(q => q.map(n => n.toFixed(1)).join(' ')).join('L') + 'Z' })
      else if (kind === 'hedge') areas.push({ kind, d: smooth(pts) })
      else lines[kind] = (lines[kind] ?? '') + smooth(pts)
    }
  }
}

const under = ['stream', 'brook', 'river', 'dots', 'path', 'track', 'cycle']
const roads = ['minor', 'tert', 'sec', 'prim', 'trunk', 'motor']

const trees: Pt[] = [[228, 600], [303, 659], [335, 609], [92, 746], [132, 727], [46, 720], [122, 818], [210, 712], [347, 209], [914, 1018], [1003, 860], [839, 614], [1530, 297], [1536, 340], [1540, 386], [1532, 432], [1605, 262], [1612, 333], [1480, 225], [1299, 810], [1230, 866], [1208, 910], [1232, 942], [1390, 888], [1274, 1020], [1333, 860], [535, 740], [302, 1000], [670, 400], [72, 530], [1448, 372], [1720, 326]]

const places: Label[] = [
  { t: 'Preston on', x: 213, y: 254.7, w: 78 }, { t: 'the Hill', x: 213, y: 274.7, w: 51 },
  { t: 'Higher Whitley', x: 806.4, y: 354.5, w: 107 }, { t: 'Lower Whitley', x: 750.5, y: 482.7, w: 102 },
  { t: 'Antrobus', x: 1112.5, y: 401.7, w: 67 }, { t: 'Acton Bridge', x: 489.7, y: 885, w: 94 },
  { t: 'Crowton', x: 318, y: 1044.7, w: 61 }, { t: 'Little Leigh', x: 791.4, y: 856, w: 79 },
  { t: 'Barnton', x: 1034.8, y: 956.7, w: 57 }, { t: 'Anderton', x: 1162, y: 933.3, w: 67 },
  { t: 'Comberbach', x: 1143, y: 687, w: 93 }, { t: 'Great Budworth', x: 1370, y: 668.3, w: 116 },
  { t: 'Upper Marston', x: 1411, y: 752.3, w: 110 }, { t: 'Pickme', x: 1714, y: 724.3, w: 51 },
  { t: 'Wincham', x: 1645.6, y: 785.3, w: 68 }, { t: 'Lostock Gr', x: 1701.5, y: 970.7, w: 75 },
  { t: 'rdis', x: 46, y: 245, w: 24 },
  { t: 'Whitehouse', x: 127.7, y: 394.3, w: 72, c: 'works' }, { t: 'Tata Chemicals', x: 1186, y: 1002, w: 92, c: 'works' },
  { t: 'Europe', x: 1186, y: 1019, w: 44, c: 'works' }, { t: 'Big Wood', x: 1551.4, y: 358.3, w: 59, c: 'woods' },
  { t: 'Marbury', x: 1243, y: 791.7, w: 54, c: 'parkland' }, { t: 'Country', x: 1243, y: 808.7, w: 49, c: 'parkland' },
  { t: 'Park', x: 1243, y: 825.3, w: 27, c: 'parkland' }, { t: 'Aston Grange', x: 136, y: 614.3, w: 90, c: 'peak' },
  { t: '66 m', x: 136, y: 631.3, w: 32, c: 'peak' },
]

const alongs: RoadLabel[] = [
  { t: 'Northwich Road', d: 'M882 211L942 291', w: 84 },
  { t: 'Northwich Road', d: 'M997 356Q1007 386 1038 430L1044 440', w: 84 },
  { t: 'Warrington Road', d: 'M1100 503Q1128 535 1175 557L1186 562', w: 93 },
  { t: 'Tarporley Road', d: 'M709 556Q716 530 734 510Q744 496 747 484L749 472', w: 82 },
  { t: 'Northwich Road', d: 'M489 652Q525 664 575 655L588 653', w: 84 },
  { t: 'Warrington Road', d: 'M628 769Q629 745 648 731Q664 716 664 692L664 676', w: 90 },
  { t: 'Runcorn Road', d: 'M682 714L751 769', w: 74 },
  { t: 'Runcorn Road', d: 'M831 849Q845 882 890 899L902 903', w: 76 },
  { t: 'Mill Lane', d: 'M92 976Q110 979 132 1000L142 1008', w: 46 },
  { t: 'Station Road', d: 'M369 1041Q388 1037 404 1046Q415 1052 435 1050L447 1048', w: 68 },
  { t: 'Marston Lane', d: 'M1440 761Q1475 772 1512 785L1522 788', w: 74 },
  { t: 'Ollershaw Lane', d: 'M1482 870Q1502 830 1489 788L1486 776', w: 84 },
  { t: 'Hall Lane', d: 'M1600 896Q1622 910 1638 930L1646 940', w: 49 },
  { t: 'Manchester Road', d: 'M1531 1052Q1570 1036 1617 1022L1634 1017', w: 92 },
  { t: 'West Coast Main Line', d: 'M181 284Q186 330 197 358Q212 385 220 418L225 438', w: 142, c: 'railname' },
  { t: 'Halton', d: 'M384 404L423 364', w: 44, c: 'county' },
  { t: 'Cheshire East', d: 'M1336 275Q1346 238 1392 211L1416 198', w: 90, c: 'county' },
  { t: 'Cheshire East', d: 'M1457 693Q1500 684 1545 692L1560 695', w: 88, c: 'county' },
  { t: 'River Weaver', d: 'M47 819Q62 808 74 794L104 760L116 746', w: 80, c: 'rivername' },
  { t: 'Weaver Navigation', d: 'M458 752Q488 770 492 800Q500 835 528 838L545 839', w: 118, c: 'rivername' },
  { t: 'Weaver Navigation', d: 'M1078 1008Q1105 968 1140 968Q1160 966 1176 953L1188 942', w: 114, c: 'rivername' },
  { t: 'Weaver Navig', d: 'M922 977Q929 1005 930 1030L931 1080', w: 85, c: 'rivername' },
]

const shields = [
  { t: 'A533', x: 161, y: 414, w: 46.5, c: 'a' }, { t: 'A49', x: 702, y: 239, w: 39, c: 'a' },
  { t: 'A533', x: 894.6, y: 885.7, w: 46.5, c: 'a' }, { t: 'A49', x: 634, y: 1055, w: 39, c: 'a' },
  { t: 'A559', x: 1208, y: 566, w: 47.5, c: 'p' }, { t: 'B5153', x: 171.6, y: 1013, w: 56, c: 'b' },
  { t: 'B5142', x: 617.5, y: 952, w: 56, c: 'b' }, { t: 'B5391', x: 1556, y: 851, w: 56, c: 'b' },
  { t: 'B5075', x: 1425, y: 894, w: 55.5, c: 'b' },
]

const track: [Sheet, string][] = [
  [sheets[0], '419,172 427,245 458,303 472,470 488,525 522,575 600,830 655,998 692,1042 706,1045 830,1225 870,1230 905,1205 922,1205 945,1280 980,1325 1005,1335 1035,1315 1062,1312'],
  [sheets[3], '1068,0 1105,115 1150,185 1225,245 1250,272 1278,285 1390,450 1410,470 1430,482 1485,495 1555,540'],
  [sheets[4], '40,540 55,590 90,640 115,690 160,740 165,800 205,880 260,925 285,928 315,922 370,905 420,877 470,890 575,882 615,862 675,900 710,932 800,970 850,980 842,990 858,1080 877,1120 1065,1158 1055,1170 1078,1195 1095,1180 1135,1130 1285,975 1330,960 1415,955 1450,915 1488,810'],
  [sheets[5], '0,818 50,827 80,820 92,805 105,760 125,750 180,755 255,777 295,745 378,642 445,605 465,612 510,655 618,810 825,940 903,1053 1035,1110 1103,1110'],
]
const trackPoints = track.flatMap(([s, list]) => list.split(' ').map(q => {
  const [x, y] = q.split(',').map(Number)
  return `${(s.x + x / s.kx).toFixed(1)},${(s.y + y / s.ky).toFixed(1)}`
})).join(' ')

/* Speed chart */
const yTicks = [3, 2.5, 2, 1.5, 1, 0.5, 0].map(v => ({ v, y: Math.round(1581 - v * 128.33) }))
const xTicks = ['09/07', '09/09', '09/11', '09/13', '09/15', '09/17', '09/19'].map((t, i) => ({ t, x: Math.round(194 + i * 225.6) }))
const speed = '144.8,1579 146.4,1353.5 149.9,1581 255.7,1581 257.7,1569 258.6,1336 260.2,1386 262,1568 263.7,1278 265.3,1296 266.6,1368 268.5,1269 271,1366 273.6,1415 274.9,1345 276.1,1488 277.4,1433 279.3,1574 280.6,1581 362.9,1581 365.4,1508.6 367.3,1415 368.6,1280 370.5,1236.7 371.8,1416 373.4,1274 374.4,1576 376.3,1581 594.4,1581 595.3,1330.6 597.6,1542.4 599.2,1525.7 600.1,1565.7 602.7,1581 926.7,1581 928.3,1512.7 929.5,1362 931.1,1427 932.4,1557.6 934.9,1581 936.5,1459.6 937.5,1565.7 939,1544 940.7,1581 942.6,1581 943.9,1406.5 945.5,1257 947.7,1290 948.3,1500.4 950.9,1581 1723.3,1581'

/* Gauge */
const CX = 2292.6, CY = 759
function arc(r: number, from: number, to: number): string {
  const p = (a: number) => `${(CX + r * Math.cos(a * Math.PI / 180)).toFixed(2)} ${(CY - r * Math.sin(a * Math.PI / 180)).toFixed(2)}`
  return `M${p(from)}A${r} ${r} 0 ${from - to > 180 ? 1 : 0} 1 ${p(to)}`
}

/* Compass */
const rose = [
  { t: 'North', x: 0, y: -137.7 }, { t: 'NW', x: -86, y: -93 }, { t: 'NE', x: 86.4, y: -93 },
  { t: 'West', x: -137.3, y: 16 }, { t: 'East', x: 138.3, y: 16 }, { t: 'SW', x: -86, y: 123.8 },
  { t: 'SE', x: 86.4, y: 123.8 }, { t: 'South', x: 0, y: 169 },
]

const icons = {
  down: 'M17,9.17a1,1,0,0,0-1.41,0L12,12.71,8.46,9.17a1,1,0,0,0-1.41,0,1,1,0,0,0,0,1.42l4.24,4.24a1,1,0,0,0,1.42,0L17,10.59A1,1,0,0,0,17,9.17Z',
  right: 'M14.83,11.29,10.59,7.05a1,1,0,0,0-1.42,0,1,1,0,0,0,0,1.41L12.71,12,9.17,15.54a1,1,0,0,0,0,1.41,1,1,0,0,0,.71.29,1,1,0,0,0,.71-.29l4.24-4.24A1,1,0,0,0,14.83,11.29Z',
  share: 'M18,14a4,4,0,0,0-3.08,1.48l-5.1-2.35a3.64,3.64,0,0,0,0-2.26l5.1-2.35A4,4,0,1,0,14,6a4.17,4.17,0,0,0,.07.71L8.79,9.14a4,4,0,1,0,0,5.72l5.28,2.43A4.17,4.17,0,0,0,14,18a4,4,0,1,0,4-4ZM18,4a2,2,0,1,1-2,2A2,2,0,0,1,18,4ZM6,14a2,2,0,1,1,2-2A2,2,0,0,1,6,14Zm12,6a2,2,0,1,1,2-2A2,2,0,0,1,18,20Z',
  star: 'M22,10.1c.1-.5-.3-1.1-.8-1.1l-5.7-.8L12.9,3c-.1-.2-.2-.3-.4-.4C12,2.300 11.400,2.500 11.100,3L8.600,8.200,2.900,9c-.3,0-.5.1-.6.3-.4.4-.4,1,0,1.400l4.100,4-1,5.700c0,.2,0,.4.1.6.3.5.9.7,1.400.4l5.100-2.700,5.100,2.700c.1.1.3.1.5.1h.2c.5-.1.9-.6.8-1.200l-1-5.700,4.100-4C21.900,10.500,22,10.300,22,10.100Z',
  save: 'm20.71,9.29-6-6a1,1,0,0,0-.32-.21A1.09,1.09,0,0,0,14,3H6A3,3,0,0,0,3,6V18a3,3,0,0,0,3,3H18a3,3,0,0,0,3-3V10A1,1,0,0,0,20.71,9.29ZM9,5h4V7H9Zm6,14H9V16a1,1,0,0,1,1-1h4a1,1,0,0,1,1,1Zm4-1a1,1,0,0,1-1,1H17V16a3,3,0,0,0-3-3H10a3,3,0,0,0-3,3v3H6a1,1,0,0,1-1-1V6A1,1,0,0,1,6,5H7V8A1,1,0,0,0,8,9h6a1,1,0,0,0,1-1V6.41l4,4Z',
  cog: 'M21.32,9.55l-1.89-.63.89-1.78A1,1,0,0,0,20.13,6L18,3.87a1,1,0,0,0-1.15-.19l-1.78.89-.63-1.89A1,1,0,0,0,13.5,2h-3a1,1,0,0,0-.95.68L8.92,4.57,7.14,3.68A1,1,0,0,0,6,3.87L3.87,6a1,1,0,0,0-.19,1.15l.89,1.78-1.89.63A1,1,0,0,0,2,10.5v3a1,1,0,0,0,.68.95l1.89.63-.89,1.78A1,1,0,0,0,3.87,18L6,20.13a1,1,0,0,0,1.15.19l1.78-.89.63,1.89a1,1,0,0,0,.95.68h3a1,1,0,0,0,.95-.68l.63-1.89,1.78.89A1,1,0,0,0,18,20.13L20.13,18a1,1,0,0,0,.19-1.15l-.89-1.78,1.89-.63A1,1,0,0,0,22,13.5v-3A1,1,0,0,0,21.32,9.55ZM20,12.78l-1.2.4A2,2,0,0,0,17.64,16l.57,1.14-1.1,1.1L16,17.64a2,2,0,0,0-2.79,1.16l-.4,1.2H11.22l-.4-1.2A2,2,0,0,0,8,17.64l-1.14.57-1.1-1.1L6.36,16A2,2,0,0,0,5.2,13.18L4,12.78V11.22l1.2-.4A2,2,0,0,0,6.36,8L5.79,6.89l1.1-1.1L8,6.36A2,2,0,0,0,10.82,5.2l.4-1.2h1.56l.4,1.2A2,2,0,0,0,16,6.36l1.14-.57,1.1,1.1L17.64,8a2,2,0,0,0,1.16,2.79l1.2.4ZM12,8a4,4,0,1,0,4,4A4,4,0,0,0,12,8Zm0,6a2,2,0,1,1,2-2A2,2,0,0,1,12,14Z',
  clock: 'M12,2A10,10,0,1,0,22,12,10,10,0,0,0,12,2Zm0,18a8,8,0,1,1,8-8A8,8,0,0,1,12,20ZM12,6a1,1,0,0,0-1,1v4H9a1,1,0,0,0,0,2h3a1,1,0,0,0,1-1V7A1,1,0,0,0,12,6Z',
  zoomOut: 'M21.71,20.29,18,16.61A9,9,0,1,0,16.61,18l3.68,3.68a1,1,0,0,0,1.42,0A1,1,0,0,0,21.71,20.29ZM11,18a7,7,0,1,1,7-7A7,7,0,0,1,11,18Zm4-8H7a1,1,0,0,0,0,2h8a1,1,0,0,0,0-2Z',
  sync: 'M19.91,15.51H15.38a1,1,0,0,0,0,2h2.4A8,8,0,0,1,4,12a1,1,0,0,0-2,0,10,10,0,0,0,16.88,7.23V21a1,1,0,0,0,2,0V16.5A1,1,0,0,0,19.91,15.51ZM12,2A10,10,0,0,0,5.12,4.77V3a1,1,0,0,0-2,0V7.5a1,1,0,0,0,1,1h4.5a1,1,0,0,0,0-2H6.22A8,8,0,0,1,20,12a1,1,0,0,0,2,0A10,10,0,0,0,12,2Z',
  monitor: 'M19,2H5A3,3,0,0,0,2,5V15a3,3,0,0,0,3,3H7.64l-.58,1a2,2,0,0,0,0,2,2,2,0,0,0,1.75,1h6.46A2,2,0,0,0,17,21a2,2,0,0,0,0-2l-.59-1H19a3,3,0,0,0,3-3V5A3,3,0,0,0,19,2ZM8.77,20,10,18H14l1.2,2ZM20,15a1,1,0,0,1-1,1H5a1,1,0,0,1-1-1V14H20Zm0-3H4V5A1,1,0,0,1,5,4H19a1,1,0,0,1,1,1Z',
}
</script>

<template>
  <div class="page">
    <header class="bar">
      <svg class="burger" viewBox="0 0 40 24"><path d="M2 2H38M2 12H38M2 22H38" /></svg>
      <span class="crumb home">Home</span>
      <svg class="ic sep" viewBox="0 0 24 24"><path :d="icons.right" /></svg>
      <span class="crumb dash">Dashboards</span>
      <svg class="ic sep" viewBox="0 0 24 24"><path :d="icons.right" /></svg>
      <span class="crumb here">Position and speed</span>
      <svg class="ic star" viewBox="0 0 24 24"><path :d="icons.star" /></svg>
      <svg class="ic share" viewBox="0 0 24 24"><path :d="icons.share" /></svg>
      <div class="tools">
        <button class="add">
          <svg class="addicon" viewBox="0 0 38 22">
            <path d="M0 8h5v14h-5zM7 4h5v18h-5zM14 11h5v11h-5zM21 1h4v6h-3v8h3v7h-4z" fill="#6e9fff" />
            <path d="M29 4.500h4v5h5v4h-5v5h-4v-5h-5v-4h5z" fill="#ed9f47" />
          </svg>
          <span>Add</span>
          <svg class="ic" viewBox="0 0 24 24"><path :d="icons.down" /></svg>
        </button>
        <svg class="ic save" viewBox="0 0 24 24"><path :d="icons.save" /></svg>
        <svg class="ic cog" viewBox="0 0 24 24"><path :d="icons.cog" /></svg>
        <svg class="ic clock" viewBox="0 0 24 24"><path :d="icons.clock" /></svg>
        <span class="range">Last 14 days</span>
        <svg class="ic" viewBox="0 0 24 24"><path :d="icons.down" /></svg>
        <svg class="ic zo" viewBox="0 0 24 24"><path :d="icons.zoomOut" /></svg>
        <svg class="ic sy" viewBox="0 0 24 24"><path :d="icons.sync" /></svg>
        <svg class="ic d2" viewBox="0 0 24 24"><path :d="icons.down" /></svg>
        <i class="rule"></i>
        <svg class="ic mo" viewBox="0 0 24 24"><path :d="icons.monitor" /></svg>
        <svg class="ic big" viewBox="0 0 24 24"><path :d="icons.down" /></svg>
      </div>
    </header>

    <main class="board">
      <div class="col left">
        <section class="panel location">
          <h2>Location history</h2>
          <button class="menu"><i></i><i></i><i></i></button>
          <div class="map">
            <svg class="tiles" viewBox="34 192 1706 872">
              <defs>
                <pattern id="marsh" width="26" height="16" patternUnits="userSpaceOnUse">
                  <path d="M1 4H12M14 12H24" stroke="#74b0ee" stroke-width="1.600" />
                </pattern>
              </defs>
              <rect x="34" y="192" width="1706" height="872" fill="#f2efea" />
              <path v-for="(a, i) in areas" :key="'a' + i" :class="['area', a.kind]" :d="a.d" />
              <circle v-for="(p, i) in copses" :key="'c' + i" class="copse" :cx="p[0]" :cy="p[1]" r="3.800" />
              <ellipse v-for="(p, i) in ponds" :key="'p' + i" class="pond" :cx="p[0]" :cy="p[1]" rx="1.800" ry="2.600" />
              <path v-for="(t, i) in trees" :key="'t' + i" class="tree" :d="`M${t[0]} ${t[1] - 6}l-4 9h8zm0 9v4M${t[0] - 9} ${t[1]}v7m-3 -10a3 3.500 0 1 0 6 0a3 3.500 0 1 0 -6 0`" />
              <path v-for="k in under" :key="k" :class="['line', k]" :d="lines[k]" />
              <path v-for="k in roads" :key="k + 'c'" :class="['line', 'case', k]" :d="lines[k]" />
              <path v-for="k in roads" :key="k" :class="['line', k]" :d="lines[k]" />
              <path class="line rail" :d="lines.rail" />
              <path class="line railgap" :d="lines.rail" />
              <path class="line bound" :d="lines.bound" />
              <rect x="561" y="1032" width="9" height="9" fill="#7a7fb0" />
              <rect x="1699" y="1012" width="9" height="9" fill="#7a7fb0" />
              <path d="M136 589l5.500 9h-11z" fill="#cf9560" />
              <text v-for="(l, i) in places" :key="'l' + i" :class="['place', l.c]" :x="l.x" :y="l.y" text-anchor="middle" :textLength="l.w" lengthAdjust="spacingAndGlyphs">{{ l.t }}</text>
              <g v-for="(r, i) in alongs" :key="'r' + i">
                <path :id="'along' + i" :d="r.d" fill="none" />
                <text :class="['road', r.c]"><textPath :href="'#along' + i" :textLength="r.w" lengthAdjust="spacingAndGlyphs">{{ r.t }}</textPath></text>
              </g>
              <g v-for="(s, i) in shields" :key="'s' + i" :class="['shield', s.c]">
                <rect :x="s.x" :y="s.y" :width="s.w" height="24" rx="2.500" />
                <text :x="s.x + s.w / 2" :y="s.y + 17" text-anchor="middle" :textLength="s.w - 14" lengthAdjust="spacingAndGlyphs">{{ s.t }}</text>
              </g>
              <polyline class="voyage" :points="trackPoints" />
            </svg>
            <div class="zoom">
              <svg viewBox="0 0 60 58"><path d="M18.500 35H43.500M31 23V47" /></svg>
              <svg viewBox="0 0 60 60"><path d="M18.500 35H43.500" /></svg>
            </div>
            <div class="layers">
              <svg viewBox="0 0 52 52">
                <path d="M0 34L26 18L52 34L26 51z" fill="#6f6f6f" /><path d="M0 32L26 16L52 32L26 48.500z" fill="#b9b9b9" />
                <path d="M0 25L26 9L52 25L26 42z" fill="#6f6f6f" /><path d="M0 23.500L26 8L52 23.500L26 40z" fill="#cfcfcf" />
                <path d="M0 17L26 1L52 17L26 34z" fill="#6f6f6f" /><path d="M0 15.500L26 0L52 15.500L26 32z" fill="#f2f2f2" />
                <path d="M8 20L26 9L44 20L26 32z" fill="#dcdcdc" />
              </svg>
            </div>
            <div class="credit"><a>Leaflet</a> | © <a>OpenStreetMap</a></div>
          </div>
          <i class="grip"></i>
        </section>

        <section class="panel speed">
          <h2>Speed over time</h2>
          <svg class="chart" viewBox="34 1180 1706 452">
            <path v-for="t in yTicks" :key="t.v" class="grid" :d="`M136 ${t.y}H1724`" />
            <path v-for="t in xTicks" :key="t.t" class="grid" :d="`M${t.x} 1196V1590`" />
            <text v-for="t in yTicks" :key="'y' + t.v" x="126" :y="t.y + 8" text-anchor="end">{{ t.v }} mph</text>
            <text v-for="t in xTicks" :key="'x' + t.t" :x="t.x" y="1619" text-anchor="middle">{{ t.t }}</text>
            <polyline class="series" :points="speed" />
          </svg>
          <div class="legend"><i></i><span>navigation.speedOverGround.mean</span></div>
        </section>
      </div>

      <div class="col right">
        <section class="panel gauge">
          <h2>Current Speed</h2>
          <svg class="dial" viewBox="1792 192 1002 796">
            <path :d="arc(434.500, 198, -18)" stroke="#24252b" stroke-width="80" />
            <path :d="arc(485, 198, 126)" stroke="#e0555f" stroke-width="14" />
            <path :d="arc(485, 126, 54)" stroke="#e0b953" stroke-width="14" />
            <path :d="arc(485, 54, -18)" stroke="#85bd72" stroke-width="14" />
            <text x="2291" y="848" text-anchor="middle" textLength="540" lengthAdjust="spacingAndGlyphs">stopped</text>
          </svg>
        </section>

        <section class="panel heading">
          <h2>Current heading</h2>
          <svg class="rose" viewBox="-325.700 -284 652 568">
            <circle r="262.600" fill="#fff" stroke="#9c2022" stroke-width="14.200" />
            <g v-for="i in 8" :key="i">
              <path d="M0 -242V-185" stroke="#ee8333" stroke-width="7.300" :transform="`rotate(${i * 45})`" />
              <path d="M0 -241V-199" stroke="#d4692a" stroke-width="1.400" :transform="`rotate(${i * 45 + 22.500})`" />
            </g>
            <circle r="28.500" fill="#97b6f8" />
            <text v-for="r in rose" :key="r.t" :x="r.x" :y="r.y" text-anchor="middle">{{ r.t }}</text>
            <text class="deg" x="0" y="88" text-anchor="middle">35 °</text>
            <g transform="rotate(35)" fill="#cf4049">
              <path d="M-3.700 -220H3.700V170H-3.700zM0 -238L10.500 -216H-10.500zM-10.700 168.500H10.700V172H-10.700zM-3.700 166L0 172L3.700 166z" />
            </g>
          </svg>
        </section>
      </div>
    </main>
  </div>
</template>

<style>
html, body { margin: 0; background: #111217; }
</style>

<style scoped>
.page { box-sizing: border-box; width: 2844px; height: 1776px; overflow: hidden; background: #111217; border-right: 2px solid #34353a; font-family: Inter, "Liberation Sans", sans-serif; color: #ccccdc; }
.bar { position: relative; display: flex; align-items: center; height: 78px; padding: 0 0 2px 20px; box-sizing: border-box; background: #1b1c20; box-shadow: 0 2px 8px 2px rgba(0, 0, 0, .75), 0 4px 28px rgba(0, 0, 0, .4); font-size: 28px; font-weight: 500; letter-spacing: .25px; white-space: nowrap; }
.burger { width: 40px; height: 24px; stroke: #ccccdc; stroke-width: 4; stroke-linecap: round; }
.ic { width: 36px; height: 36px; flex: none; fill: currentColor; display: block; }
.crumb { flex: none; padding-top: 2px; }
.home { margin-left: 36px; width: 85px; }
.sep { color: #8f8f9b; }
.dash { margin-left: 6px; width: 168px; }
.here { margin-left: 6px; width: 290px; color: #8e8e9a; letter-spacing: .15px; }
.star { color: #e08538; }
.share { margin-left: 32px; }
.tools { display: flex; align-items: center; margin-left: auto; color: #8e8e9a; }
.add { box-sizing: border-box; display: flex; align-items: center; width: 162px; height: 56px; padding: 0 0 0 11px; background: none; border: 2px solid #6e9fff; border-radius: 4px; color: #6e9fff; font: inherit; letter-spacing: inherit; }
.addicon { width: 38px; height: 22px; margin-right: 10px; }
.add span { width: 55px; text-align: left; }
.save { margin-left: 34px; }
.cog { margin-left: 52px; }
.clock { margin-left: 52px; }
.range { margin-left: 16px; width: 190px; padding-top: 2px; letter-spacing: .45px; }
.zo { margin-left: 31px; }
.sy { margin-left: 52px; }
.d2 { margin-left: 32px; }
.rule { width: 2px; height: 48px; margin-left: 24px; background: #33343a; }
.mo { margin-left: 18px; }
.big { width: 48px; height: 48px; margin: 2px 24px 0 28px; }

.board { display: flex; gap: 16px; padding: 32px 0 0 16px; }
.col { display: flex; flex-direction: column; gap: 16px; }
.left { width: 1742px; }
.right { width: 1038px; }
.panel { position: relative; box-sizing: border-box; display: flex; flex-direction: column; background: #1a1b1f; border: 2px solid #25262b; border-radius: 4px; padding: 0 16px; }
.location { height: 972px; }
.speed { height: 592px; }
.gauge { height: 896px; }
.heading { height: 668px; width: 688px; }
h2 { margin: 0 0 16px; height: 64px; line-height: 67px; font-size: 28px; font-weight: 500; letter-spacing: .33px; flex: none; }
.menu { position: absolute; top: 0; right: 0; width: 48px; height: 64px; padding: 0; border: 0; border-radius: 3px; background: #303136; display: flex; flex-direction: column; align-items: center; justify-content: center; gap: 5px; }
.menu i { width: 4px; height: 4px; border-radius: 50%; background: #ccccdc; }
.grip { position: absolute; right: 4px; bottom: 4px; width: 6px; height: 6px; border: solid #6b6c70; border-width: 0 4px 4px 0; }

.map { position: relative; height: 872px; overflow: hidden; }
.tiles { display: block; width: 1706px; height: 872px; }
.zoom { position: absolute; left: 20px; top: 20px; width: 60px; border: 4px solid rgba(0, 0, 0, .2); border-radius: 8px; background: #fff; background-clip: padding-box; }
.zoom svg { display: block; width: 60px; height: 58px; stroke: #000; stroke-width: 4.600; }
.zoom svg + svg { height: 60px; border-top: 2px solid #ccc; }
.layers { position: absolute; right: 20px; top: 20px; width: 88px; height: 88px; border: 4px solid rgba(0, 0, 0, .2); border-radius: 10px; background: #fff; background-clip: padding-box; display: flex; align-items: center; justify-content: center; }
.layers svg { width: 52px; height: 52px; }
.credit { position: absolute; right: 0; bottom: 0; box-sizing: border-box; width: 291px; height: 33px; padding-left: 11px; background: rgba(255, 255, 255, .8); color: #333; font: 22.500px/35px "Liberation Sans", Arial, sans-serif; letter-spacing: .1px; word-spacing: .3px; white-space: nowrap; }
.credit a { color: #2b78ab; }

.farm { fill: #eef0d5; } .land { fill: #f2efea; } .wood { fill: #b3d0a1; } .grass { fill: #d4ebb6; }
.scrub { fill: #cbd8ae; } .golf { fill: #e0f5c2; } .park { fill: #d2f9d0; } .water { fill: #b1d3de; }
.res { fill: #e0dedf; } .ind { fill: #e8dce8; } .yard { fill: #f3dcc0; } .school { fill: #fdfde2; }
.strip { fill: #bab9cd; } .brown { fill: #c7c8b6; } .pink { fill: #f0dad8; } .marsh { fill: url(#marsh); }
.wood, .scrub, .yard, .water { stroke-linejoin: round; stroke-width: 1.500; }
.wood { stroke: #b3d0a1; } .scrub { stroke: #cbd8ae; } .water { stroke: #b1d3de; }
.hedge { fill: none; stroke: #b3d0a1; stroke-width: 5.500; stroke-linecap: round; stroke-linejoin: round; }
.copse { fill: #b9d3a8; }
.pond { fill: #b1d3de; }
.tree { fill: none; stroke: #9abc8a; stroke-width: 1; opacity: .8; }
.line { fill: none; stroke-linecap: round; stroke-linejoin: round; }
.stream { stroke: #c6dfe4; stroke-width: 1.200; }
.brook { stroke: #b1d3de; stroke-width: 4; }
.river { stroke: #b1d3de; stroke-width: 7.600; }
.dots { stroke: #7fa86f; stroke-width: 1.800; stroke-dasharray: .1 9; }
.path { stroke: #8fc08a; stroke-width: 1.200; stroke-dasharray: 5 3; stroke-linecap: butt; }
.track { stroke: #cdae7c; stroke-width: 1.200; stroke-dasharray: 6 4; stroke-linecap: butt; }
.cycle { stroke: #5a63e6; stroke-width: 1.900; stroke-dasharray: .1 4.500; }
.minor { stroke: #fff; stroke-width: 2.600; } .minor.case { stroke: #d2cfcd; stroke-width: 4.400; }
.tert { stroke: #fff; stroke-width: 4.600; } .tert.case { stroke: #c4c1bf; stroke-width: 6.400; }
.sec { stroke: #f6f9c1; stroke-width: 6.500; } .sec.case { stroke: #c3c68b; stroke-width: 8.500; }
.prim { stroke: #f6d4a4; stroke-width: 6.800; } .prim.case { stroke: #c9a15f; stroke-width: 8.800; }
.trunk { stroke: #edb29f; stroke-width: 8; } .trunk.case { stroke: #d48973; stroke-width: 10; }
.motor { stroke: #dc95a4; stroke-width: 14; } .motor.case { stroke: #c76b80; stroke-width: 16; }
.rail { stroke: #757575; stroke-width: 4.800; stroke-linecap: butt; }
.railgap { stroke: #e4e4e4; stroke-width: 1.700; stroke-dasharray: 10 10; stroke-linecap: butt; }
.bound { stroke: #b9a5bb; stroke-width: 2.600; stroke-dasharray: 14 3 3 3; stroke-linecap: butt; }
.voyage { fill: none; stroke: #eb3323; stroke-width: 6.300; stroke-linecap: round; stroke-linejoin: round; }

.tiles text { font-family: "Noto Sans", sans-serif; paint-order: stroke; stroke-linejoin: round; }
.place { font-size: 15.500px; fill: #3a3a3a; stroke: rgba(255, 255, 255, .7); stroke-width: 3px; }
.works { font-size: 13.500px; font-style: italic; fill: #6d4a6c; }
.woods { font-size: 13.500px; font-style: italic; fill: #55745a; }
.parkland { font-size: 13.500px; font-style: italic; fill: #5c9a60; }
.peak { font-size: 14px; fill: #866343; }
.road { font-size: 12.500px; fill: #4a3a2a; stroke: rgba(250, 220, 180, .5); stroke-width: 1.500px; }
.railname { fill: #777; font-size: 13px; stroke: rgba(255, 255, 255, .6); }
.county { fill: #a184ad; font-size: 14px; stroke: rgba(255, 255, 255, .6); stroke-width: 2px; }
.rivername { fill: #6488c4; font-size: 14px; stroke: rgba(255, 255, 255, .7); stroke-width: 2px; }
.shield text { font-size: 13.500px; stroke: none; }
.shield rect { stroke-width: 1.500; }
.shield.a rect { fill: #efd6cd; stroke: #dca799; } .shield.a text { fill: #703b31; }
.shield.p rect { fill: #f5e4cf; stroke: #d9b98c; } .shield.p text { fill: #6a4d22; }
.shield.b rect { fill: #f1f2da; stroke: #cfd0a4; } .shield.b text { fill: #5a5c2c; }

.chart { display: block; width: 1706px; height: 452px; flex: none; }
.grid { stroke: #28292e; stroke-width: 2; }
.chart text { font-size: 24px; fill: #ccccdc; }
.series { fill: none; stroke: #7fb96d; stroke-width: 2; stroke-linejoin: round; }
.legend { display: flex; align-items: center; height: 42px; padding-left: 8px; font-size: 24px; letter-spacing: .2px; }
.legend i { width: 28px; height: 8px; border-radius: 4px; background: #85bd72; margin-right: 16px; }

.dial { display: block; width: 1002px; height: 796px; fill: none; }
.dial text { fill: #e0555f; font-size: 137px; font-weight: 500; }
.rose { display: block; width: 652px; height: 568px; }
.rose text { font: bold 32px "Liberation Sans", Arial, sans-serif; fill: #000; }
.rose .deg { font-size: 42px; }
</style>
